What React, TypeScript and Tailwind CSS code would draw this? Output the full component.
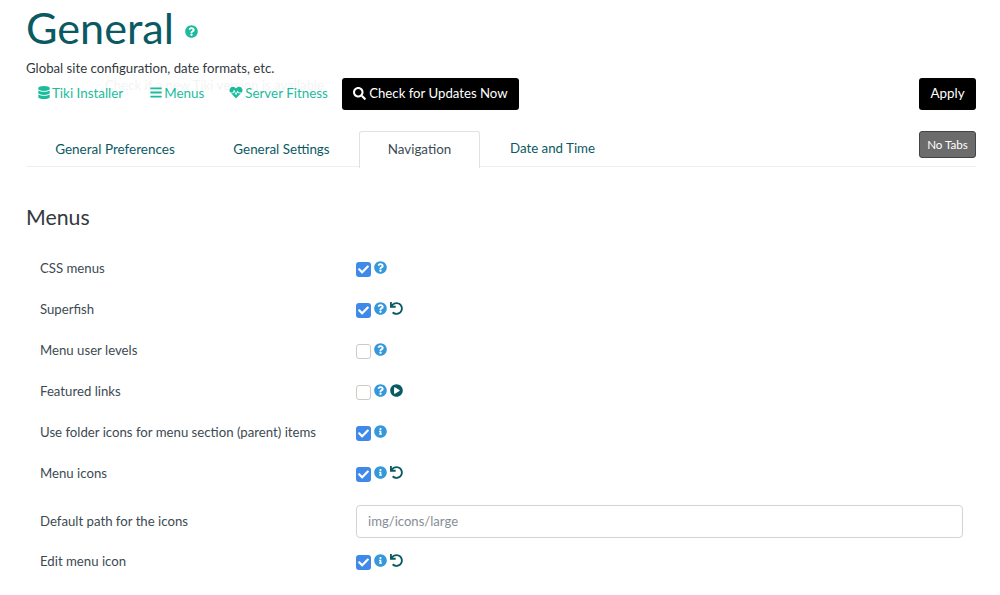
import { FaBars, FaCheck, FaDatabase, FaHeartbeat, FaInfoCircle, FaPlayCircle, FaQuestionCircle, FaSearch, FaUndo } from 'react-icons/fa';
import type { ReactNode } from 'react';

const Check = ({ on }: { on: boolean }) =>
  on ? (
    <span className="flex h-[15px] w-[15px] shrink-0 items-center justify-center rounded-[3px] bg-[#3f8ae8]">
      <FaCheck className="h-[11px] w-[11px] text-white" />
    </span>
  ) : (
    <span className="block h-[15px] w-[15px] shrink-0 rounded-[3px] border border-[#cfcac6] bg-white" />
  );

const Help = () => <FaQuestionCircle className="h-[13px] w-[13px] text-[#3498db]" />;
const Info = () => <FaInfoCircle className="h-[13px] w-[13px] text-[#3498db]" />;
const Reset = () => <FaUndo className="h-[13px] w-[13px] text-[#0b5a63]" />;

const Row = ({ label, height = 'h-[41px]', children }: { label: string; height?: string; children: ReactNode }) => (
  <div className={`flex items-center ${height}`}>
    <div className="w-[330px] pl-[14px] text-[13.2px] text-[#3d4a52]">{label}</div>
    <div className="flex flex-1 items-start gap-[3px]">{children}</div>
  </div>
);

const Toggle = ({ on, children }: { on: boolean; children: ReactNode }) => (
  <>
    <span className="mt-[1px] block">
      <Check on={on} />
    </span>
    {children}
  </>
);

export default function App() {
  return (
    <div className="h-[595px] w-[1000px] overflow-hidden bg-white pl-[26px] pr-[24px] font-['Lato',sans-serif] text-[14px] text-[#3d4a52]">
      {/* Title */}
      <div className="flex h-[56px] items-center">
        <h1 className="-mt-[3px] text-[43.2px] leading-[50px] font-normal text-[#0b5a63]">General</h1>
        <FaQuestionCircle className="mt-[7px] ml-[11px] h-[13px] w-[13px] text-[#1abc9c]" />
      </div>
      <p className="mt-[3px] h-[18px] text-[13.2px] leading-[18px] text-[#343a40]">Global site configuration, date formats, etc.</p>

      {/* Toolbar */}
      <div className="relative mt-[1px] flex h-[32px] items-center justify-between">
        {/* tooltip fading out behind the links */}
        <span className="pointer-events-none absolute top-0 left-[79px] text-[13.2px] leading-[14px] text-[#f4f4f4]">Check if a new Tiki version is available</span>
        <div className="relative flex items-center">
          <a className="-mt-[2px] ml-[12px] flex items-center gap-[2px] text-[13.4px] text-[#1abc9c]">
            <FaDatabase className="h-[13px] w-[12px]" /> Tiki Installer
          </a>
          <a className="-mt-[2px] ml-[27px] flex items-center gap-[2px] text-[13.4px] text-[#1abc9c]">
            <FaBars className="h-[13px] w-[12px]" /> Menus
          </a>
          <a className="-mt-[2px] ml-[25px] flex items-center gap-[2px] text-[13.4px] text-[#1abc9c]">
            <FaHeartbeat className="h-[13px] w-[14px]" /> Server Fitness
          </a>
          <button className="ml-[14px] flex h-[32px] w-[177px] items-center justify-center gap-[3px] rounded-[3px] bg-black pb-[1px] text-[13.2px] text-white">
            <FaSearch className="h-[13px] w-[13px]" /> Check for Updates Now
          </button>
        </div>
        <button className="h-[32px] w-[57px] rounded-[3px] bg-black pb-[1px] text-[13.4px] text-white">Apply</button>
      </div>

      {/* Tabs */}
      <div className="relative mt-[21px] flex h-[36px] border-b border-[#eceeef]">
        <div className="flex w-[178px] items-center justify-center pt-[1px] text-[13.5px] text-[#0b5a63]">General Preferences</div>
        <div className="flex w-[155px] items-center justify-center pt-[1px] text-[13.4px] text-[#0b5a63]">General Settings</div>
        <div className="h-[37px] w-[121px] rounded-t-[3px] border border-b-0 border-[#dee2e6] bg-white text-center text-[13.4px] leading-[35px] text-[#3d4a52]">Navigation</div>
        <div className="flex w-[145px] items-center justify-center pt-[1px] text-[13.3px] text-[#0b5a63]">Date and Time</div>
        <button className="absolute top-0 right-0 h-[27px] w-[57px] rounded-[3px] border border-[#444] bg-[#6c6c6c] text-[11.6px] text-white">No Tabs</button>
      </div>

      {/* Menus section */}
      <h2 className="mt-[36px] text-[21.3px] leading-[28px] font-normal text-[#343a40]">Menus</h2>
      <div className="mt-[17px]">
        <Row label="CSS menus">
          <Toggle on><Help /></Toggle>
        </Row>
        <Row label="Superfish">
          <Toggle on><Help /><Reset /></Toggle>
        </Row>
        <Row label="Menu user levels">
          <Toggle on={false}><Help /></Toggle>
        </Row>
        <Row label="Featured links">
          <Toggle on={false}><Help /><FaPlayCircle className="h-[13px] w-[13px] text-[#0b5a63]" /></Toggle>
        </Row>
        <Row label="Use folder icons for menu section (parent) items">
          <Toggle on><Info /></Toggle>
        </Row>
        <Row label="Menu icons">
          <Toggle on><Info /><Reset /></Toggle>
        </Row>
        <Row label="Default path for the icons" height="h-[55px]">
          <div className="mr-[13px] flex h-[33px] flex-1 items-center rounded-[4px] border border-[#ced4da] pl-[11px] text-[13.1px] text-[#868e96]">img/icons/large</div>
        </Row>
        <Row label="Edit menu icon" height="h-[26px]">
          <Toggle on><Info /><Reset /></Toggle>
        </Row>
      </div>
    </div>
  );
}
